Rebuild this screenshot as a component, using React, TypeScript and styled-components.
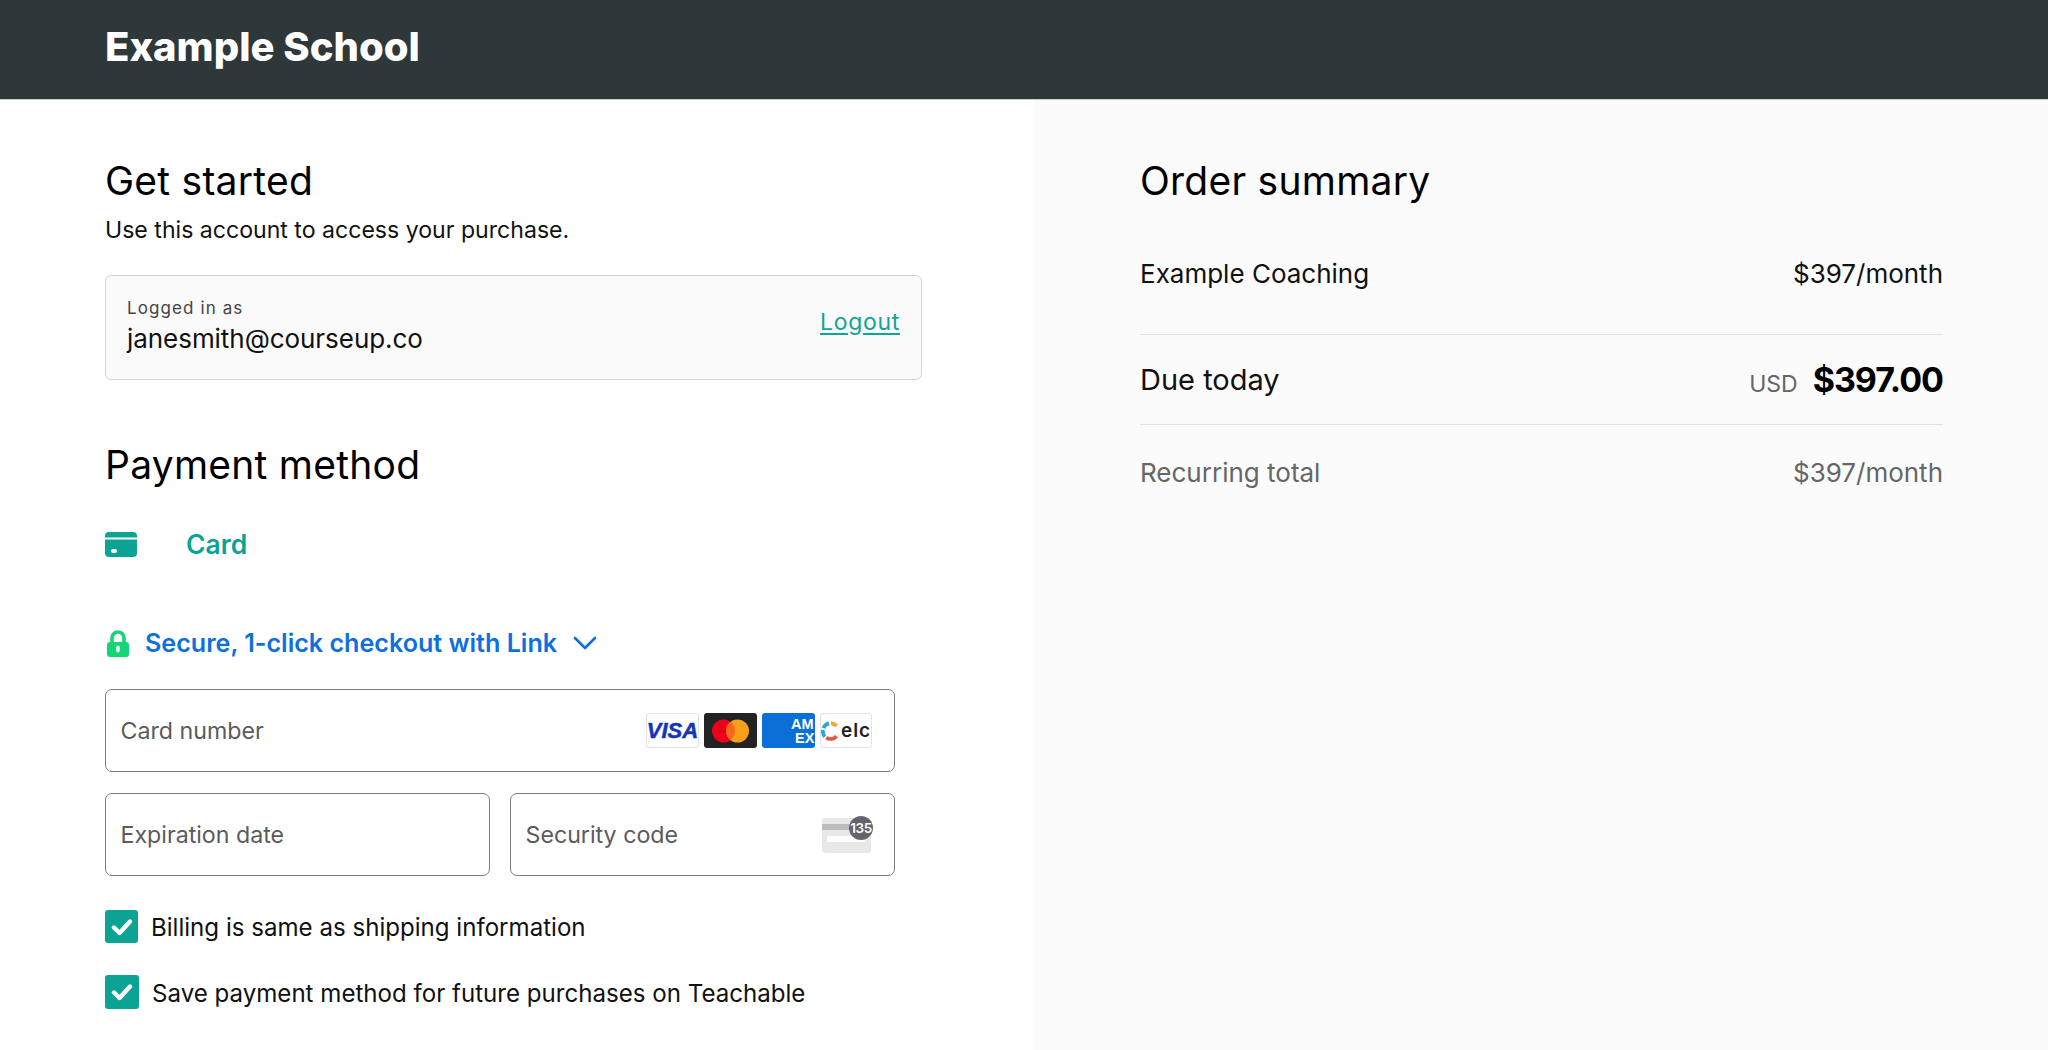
import React from "react";
import styled, { createGlobalStyle } from "styled-components";

const Global = createGlobalStyle`
  html, body { margin: 0; padding: 0; background: #fff; }
  body { font-family: Inter, "Liberation Sans", sans-serif; color: #000; overflow: hidden; }
  * { box-sizing: border-box; }
`;

const Page = styled.div`
  width: 2048px;
  height: 1050px;
  display: flex;
  flex-direction: column;
  overflow: hidden;
`;

const Header = styled.header`
  height: 100px;
  flex: none;
  background: #2e3739;
  border-bottom: 1px solid #c9cccc;
  padding-left: 105px;
  display: flex;
  align-items: center;
`;

const Brand = styled.div`
  font-weight: 800;
  font-size: 40px;
  line-height: 1;
  color: #fff;
  margin-top: -5px;
`;

const Columns = styled.div`
  flex: 1;
  display: grid;
  grid-template-columns: 1034px 1014px;
  min-height: 0;
`;

const Left = styled.main`
  padding: 57px 0 0 105px;
`;

const Right = styled.aside`
  background: #fbfbfb;
  padding: 57px 105px 0 106px;
`;

const Title = styled.h2<{ $mt?: number }>`
  margin: ${(p) => p.$mt ?? 0}px 0 0;
  font-weight: 400;
  font-size: 39px;
  line-height: 48px;
  letter-spacing: 0.25px;
  color: #000;
`;

const Sub = styled.p`
  margin: 9px 0 0;
  font-size: 23.1px;
  line-height: 32px;
  color: #111;
`;

const LoginBox = styled.div`
  margin-top: 29px;
  width: 817px;
  height: 105px;
  background: #fafafa;
  border: 1.5px solid #d4d4d4;
  border-radius: 6px;
  padding: 0 21px;
  display: flex;
  align-items: center;
  justify-content: space-between;
`;

const LoginLabel = styled.div`
  font-size: 17px;
  line-height: 22px;
  letter-spacing: 1.1px;
  color: #444;
  margin-top: -2px;
`;

const LoginEmail = styled.div`
  font-size: 26px;
  line-height: 36px;
  letter-spacing: -0.05px;
  color: #111;
  margin-top: 2px;
`;

const Logout = styled.a`
  font-size: 23px;
  letter-spacing: 0.7px;
  color: #12a594;
  text-decoration: underline;
  text-underline-offset: 3px;
  margin-top: -11px;
`;

const CardTab = styled.div`
  margin-top: 39px;
  height: 32px;
  display: flex;
  align-items: center;
  gap: 49px;
`;

const CardTabLabel = styled.span`
  font-size: 26.5px;
  font-weight: 600;
  color: #0aa394;
`;

const LinkRow = styled.div`
  margin-top: 67px;
  height: 32px;
  display: flex;
  align-items: center;
  gap: 16px;
  padding-left: 2px;
`;

const LinkLabel = styled.span`
  font-size: 25.1px;
  font-weight: 600;
  color: #0e6fde;
`;

const FieldStack = styled.div`
  margin-top: 30px;
  width: 790px;
  display: grid;
  grid-template-columns: 385px 385px;
  column-gap: 20px;
  row-gap: 21px;
`;

const Field = styled.div<{ $wide?: boolean }>`
  grid-column: ${(p) => (p.$wide ? "1 / span 2" : "auto")};
  height: 83px;
  background: #fff;
  border: 1.5px solid #7d7d7d;
  border-radius: 7px;
  padding: 0 21px 0 14.5px;
  display: flex;
  align-items: center;
  justify-content: space-between;
`;

const Placeholder = styled.span`
  font-size: 23.2px;
  color: #5b5b5b;
`;

const Brands = styled.div`
  display: flex;
  gap: 5px;
  margin-right: 1px;
`;

const Brandmark = styled.span<{ $w: number; $bg: string; $line?: boolean }>`
  width: ${(p) => p.$w}px;
  height: 35px;
  background: ${(p) => p.$bg};
  border: ${(p) => (p.$line ? "1px solid #e3e3e3" : "none")};
  border-radius: 3px;
  display: flex;
  align-items: center;
  justify-content: center;
`;

const VisaText = styled.span`
  font-family: "Liberation Sans", sans-serif;
  font-style: italic;
  font-weight: 700;
  font-size: 22px;
  -webkit-text-stroke: 0.5px #1434b8;
  color: #1434b8;
`;

const EloText = styled.span`
  font-family: Inter, sans-serif;
  font-weight: 600;
  font-size: 19px;
  letter-spacing: 0.9px;
  color: #1f1f1f;
  margin-left: 3px;
`;

const CvcWrap = styled.div`
  position: relative;
  width: 49px;
  height: 35px;
  margin-top: 1px;
  margin-right: 2px;
  border-radius: 3px;
  background: #e8e8e8;
`;

const CvcStripe = styled.div`
  height: 6px;
  background: #bcbcbc;
  position: absolute;
  left: 0;
  right: 0;
  top: 6px;
`;

const CvcLine = styled.div`
  position: absolute;
  left: 5px;
  right: 6px;
  top: 18px;
  height: 6px;
  background: #fcfcfc;
`;

const CvcBadge = styled.div`
  position: absolute;
  right: -2px;
  top: -2px;
  width: 24px;
  height: 24px;
  border-radius: 50%;
  background: #65646c;
  color: #fff;
  font-size: 13.5px;
  font-weight: 600;
  letter-spacing: -0.5px;
  display: flex;
  align-items: center;
  justify-content: center;
`;

const CheckRow = styled.label<{ $mt: number; $gap: number }>`
  margin-top: ${(p) => p.$mt}px;
  display: flex;
  align-items: center;
  gap: ${(p) => p.$gap}px;
  font-size: 24.1px;
  color: #111;
`;

const CheckLabel = styled.span`
  margin-top: 2px;
`;

const CheckBox = styled.span<{ $s: number }>`
  width: ${(p) => p.$s}px;
  height: ${(p) => p.$s}px;
  flex: none;
  background: #0aa394;
  border-radius: 3px;
  display: flex;
  align-items: center;
  justify-content: center;
`;

const SummaryRow = styled.div<{ $h: number; $pt?: number; $line?: boolean; $muted?: boolean }>`
  height: ${(p) => p.$h}px;
  padding-top: ${(p) => p.$pt ?? 0}px;
  display: flex;
  align-items: center;
  justify-content: space-between;
  font-size: 26px;
  color: ${(p) => (p.$muted ? "#666" : "#111")};
  border-bottom: ${(p) => (p.$line ? "1.5px solid #e2e2e2" : "none")};
`;

const DueLabel = styled.span`
  font-size: 29px;
`;

const Total = styled.div`
  display: flex;
  align-items: baseline;
  gap: 15px;
`;

const Usd = styled.span`
  font-size: 23px;
  color: #666;
`;

const Amount = styled.span`
  font-size: 34px;
  font-weight: 700;
  color: #000;
  letter-spacing: -1px;
`;

const Check = ({ s }: { s: number }) => (
  <CheckBox $s={s}>
    <svg width="22" height="18" viewBox="0 0 22 18" fill="none">
      <path d="M3 9.5 8.5 15 19 3.5" stroke="#fff" strokeWidth="4.4" strokeLinecap="round" strokeLinejoin="round" />
    </svg>
  </CheckBox>
);

export default function App() {
  return (
    <Page>
      <Global />
      <Header>
        <Brand>Example School</Brand>
      </Header>
      <Columns>
        <Left>
          <Title>Get started</Title>
          <Sub>Use this account to access your purchase.</Sub>
          <LoginBox>
            <div>
              <LoginLabel>Logged in as</LoginLabel>
              <LoginEmail>janesmith@courseup.co</LoginEmail>
            </div>
            <Logout>Logout</Logout>
          </LoginBox>
          <Title $mt={61}>Payment method</Title>
          <CardTab>
            <svg width="32" height="25" viewBox="0 0 32 25" fill="none">
              <path d="M0 4a4 4 0 0 1 4-4h24a4 4 0 0 1 4 4v1.5H0V4Z" fill="#0aa394" />
              <path d="M0 7.5h32V21a4 4 0 0 1-4 4H4a4 4 0 0 1-4-4V7.5Z" fill="#0aa394" />
              <rect x="6" y="17" width="6" height="4" rx="2" fill="#fff" />
            </svg>
            <CardTabLabel>Card</CardTabLabel>
          </CardTab>
          <LinkRow>
            <svg width="22" height="27" viewBox="0 0 22 27" fill="none">
              <path d="M5 13V8a6 6 0 0 1 12 0v5" stroke="#14d475" strokeWidth="3.6" />
              <rect x="0" y="12" width="22" height="15" rx="3" fill="#14d475" />
              <rect x="9.3" y="15.5" width="3.4" height="7" rx="1.7" fill="#fff" />
            </svg>
            <LinkLabel>Secure, 1-click checkout with Link</LinkLabel>
            <svg width="24" height="14" viewBox="0 0 24 14" fill="none">
              <path d="M2 2l10 10L22 2" stroke="#0e6fde" strokeWidth="2.6" strokeLinecap="round" strokeLinejoin="round" />
            </svg>
          </LinkRow>
          <FieldStack>
            <Field $wide>
              <Placeholder>Card number</Placeholder>
              <Brands>
                <Brandmark $w={53} $bg="#fff" $line>
                  <VisaText>VISA</VisaText>
                </Brandmark>
                <Brandmark $w={53} $bg="#222">
                  <svg width="37" height="24" viewBox="0 0 37 24">
                    <circle cx="11.5" cy="12" r="11.5" fill="#eb001b" />
                    <circle cx="25.5" cy="12" r="11.5" fill="#f79e1b" />
                    <path d="M18.5 2.9a11.5 11.5 0 0 1 0 18.2 11.5 11.5 0 0 1 0-18.2Z" fill="#f9651a" />
                  </svg>
                </Brandmark>
                <Brandmark $w={53} $bg="#0a6fd6">
                  <svg width="53" height="35" viewBox="0 0 53 35">
                    <g fontFamily="Liberation Sans, sans-serif" fontWeight="700" fontSize="14.5" fill="#fff">
                      <text x="29" y="16">AM</text>
                      <text x="33" y="30">EX</text>
                    </g>
                  </svg>
                </Brandmark>
                <Brandmark $w={52} $bg="#fff" $line>
                  <svg width="18" height="22" viewBox="0 0 18 22" fill="none" strokeWidth="4">
                    <path d="M10.5 3a8.5 8.5 0 0 1 6 2.6" stroke="#f5a623" />
                    <path d="M8.5 2.9A8.5 8.5 0 0 0 2.6 8" stroke="#2aa5dc" />
                    <path d="M2.1 10a8.5 8.5 0 0 0 2 7" stroke="#2aa5dc" />
                    <path d="M5.5 18a8.5 8.5 0 0 0 11-1.5" stroke="#e5573f" />
                  </svg>
                  <EloText>elc</EloText>
                </Brandmark>
              </Brands>
            </Field>
            <Field>
              <Placeholder>Expiration date</Placeholder>
            </Field>
            <Field>
              <Placeholder>Security code</Placeholder>
              <CvcWrap>
                <CvcStripe />
                <CvcLine />
                <CvcBadge>135</CvcBadge>
              </CvcWrap>
            </Field>
          </FieldStack>
          <CheckRow $mt={34} $gap={13}>
            <Check s={33} />
            <CheckLabel>Billing is same as shipping information</CheckLabel>
          </CheckRow>
          <CheckRow $mt={32} $gap={13}>
            <Check s={34} />
            <CheckLabel>Save payment method for future purchases on Teachable</CheckLabel>
          </CheckRow>
        </Left>
        <Right>
          <Title>Order summary</Title>
          <SummaryRow $h={130} $pt={8} $line>
            <span>Example Coaching</span>
            <span>$397/month</span>
          </SummaryRow>
          <SummaryRow $h={90} $line>
            <DueLabel>Due today</DueLabel>
            <Total>
              <Usd>USD</Usd>
              <Amount>$397.00</Amount>
            </Total>
          </SummaryRow>
          <SummaryRow $h={95} $muted>
            <span>Recurring total</span>
            <span>$397/month</span>
          </SummaryRow>
        </Right>
      </Columns>
    </Page>
  );
}
